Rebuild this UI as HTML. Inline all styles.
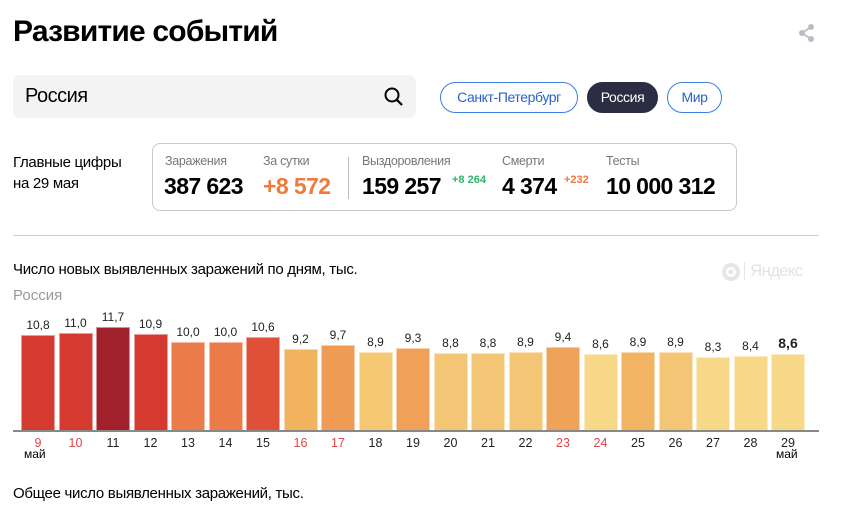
<!DOCTYPE html>
<html><head><meta charset="utf-8"><style>
*{margin:0;padding:0;box-sizing:border-box}
body{width:841px;height:511px;background:#fff;font-family:"Liberation Sans",sans-serif;color:#000;position:relative;overflow:hidden}
.a{position:absolute;white-space:nowrap}
.pill{position:absolute;top:82px;height:31px;border:1.5px solid #3d7de0;border-radius:16px;color:#2a63c9;font-size:14px;line-height:28px;text-align:center;letter-spacing:-0.4px}
.lab{font-size:12.5px;color:#777;letter-spacing:-0.3px}
.num{font-size:23px;font-weight:bold;letter-spacing:-0.6px}
.bar{position:absolute;width:34px;border:1px solid rgba(255,255,255,.5);border-bottom:none}
.v{position:absolute;width:40px;text-align:center;font-size:12px;color:#222}
.d{position:absolute;width:40px;text-align:center;font-size:12.5px;top:436px;color:#222}
</style></head><body>
<div class="a" style="left:13px;top:15px;font-size:30px;font-weight:bold;letter-spacing:-0.8px">Развитие событий</div>
<svg class="a" style="left:797px;top:23px" width="20" height="20" viewBox="0 0 20 20"><g fill="#b9bcc4"><circle cx="14" cy="4" r="3"/><circle cx="5" cy="10" r="3"/><circle cx="14" cy="16" r="3"/></g><path d="M14 4L5 10L14 16" stroke="#b9bcc4" stroke-width="1.8" fill="none"/></svg>
<div class="a" style="left:13px;top:75px;width:403px;height:43px;background:#f3f3f3;border-radius:7px"></div>
<div class="a" style="left:25px;top:85px;font-size:20px;letter-spacing:-0.5px">Россия</div>
<svg class="a" style="left:383px;top:86px" width="22" height="22" viewBox="0 0 22 22"><circle cx="9" cy="9" r="6.5" stroke="#000" stroke-width="2" fill="none"/><path d="M13.8 13.8L19 19" stroke="#000" stroke-width="2.2"/></svg>
<div class="pill" style="left:440px;width:138px">Санкт-Петербург</div>
<div class="pill" style="left:587px;width:71px;background:#2b2d42;border-color:#2b2d42;color:#fff">Россия</div>
<div class="pill" style="left:667px;width:55px">Мир</div>
<div class="a" style="left:13px;top:152px;font-size:15px;line-height:21px;letter-spacing:-0.3px">Главные цифры<br>на 29 мая</div>
<div class="a" style="left:152px;top:143px;width:585px;height:68px;border:1px solid #c9c9c9;border-radius:8px"></div>
<div class="a" style="top:157px;width:1px;height:42px;background:#bbb;left:348px"></div>
<div class="a lab" style="left:165px;top:154px">Заражения</div>
<div class="a num" style="left:164px;top:173px">387 623</div>
<div class="a lab" style="left:263px;top:154px">За сутки</div>
<div class="a num" style="left:263px;top:173px;color:#f07a3a">+8 572</div>
<div class="a lab" style="left:362px;top:154px">Выздоровления</div>
<div class="a num" style="left:362px;top:173px">159 257</div>
<div class="a" style="left:452px;top:174px;font-size:11px;color:#2fb36e;font-weight:bold">+8 264</div>
<div class="a lab" style="left:502px;top:154px">Смерти</div>
<div class="a num" style="left:502px;top:173px">4 374</div>
<div class="a" style="left:564px;top:174px;font-size:11px;color:#f07a3a;font-weight:bold">+232</div>
<div class="a lab" style="left:606px;top:154px">Тесты</div>
<div class="a num" style="left:606px;top:173px">10 000 312</div>
<div class="a" style="left:13px;top:235px;width:806px;height:1px;background:#ccc"></div>
<div class="a" style="left:13px;top:261px;font-size:15px;letter-spacing:-0.3px">Число новых выявленных заражений по дням, тыс.</div>
<div class="a" style="left:13px;top:287px;font-size:15px;color:#999">Россия</div>
<svg class="a" style="left:721px;top:262px" width="20" height="20"><circle cx="10" cy="10" r="9" fill="#e6e6e9"/><circle cx="10" cy="10" r="5" fill="#fff"/><circle cx="10" cy="10" r="2.5" fill="#e6e6e9"/></svg>
<div class="a" style="left:744px;top:262px;width:1px;height:18px;background:#e6e6e9"></div>
<div class="a" style="left:750px;top:261px;font-size:17px;color:#e3e3e6;letter-spacing:-0.8px">Яндекс</div>
<div id="c"></div>
<div class="a" style="left:13px;top:430px;width:806px;height:2px;background:#888"></div>
<div class="a" style="left:13px;top:485px;font-size:15px;letter-spacing:-0.3px">Общее число выявленных заражений, тыс.</div>
<script>
var v=[10.8,11.0,11.7,10.9,10.0,10.0,10.6,9.2,9.7,8.9,9.3,8.8,8.8,8.9,9.4,8.6,8.9,8.9,8.3,8.4,8.6];
var c=["#d43a2f","#d43a2f","#a0202c","#d43a2f","#ec7b4a","#ec7b4a","#e04f37","#f2b35f","#ef9a55","#f5c873","#efa15a","#f3c676","#f3c676","#f3c676","#efa35a","#f7d888","#f0b462","#f3c676","#f7d888","#f7d888","#f7d888"];
var red=[0,1,7,8,14,15];var h="";
for(var i=0;i<21;i++){var x=21+i*37.5,ht=Math.round(v[i]*8.8),t=430-ht;
h+='<div class="bar" style="left:'+x+'px;top:'+t+'px;height:'+ht+'px;background:'+c[i]+'"></div>';
h+='<div class="v" style="left:'+(x-3)+'px;top:'+(t-17)+'px'+(i==20?';font-weight:bold;font-size:14px;top:'+(t-19)+'px':'')+'">'+String(v[i].toFixed(1)).replace('.',',')+'</div>';
h+='<div class="d" style="left:'+(x-3)+'px;color:'+(red.indexOf(i)>=0?'#e0454a':'#222')+'">'+(9+i)+'</div>';}
h+='<div class="a" style="left:24px;top:447px;font-size:12px">май</div><div class="a" style="left:776px;top:447px;font-size:12px">май</div>';
document.getElementById('c').innerHTML=h;
</script>
</body></html>
